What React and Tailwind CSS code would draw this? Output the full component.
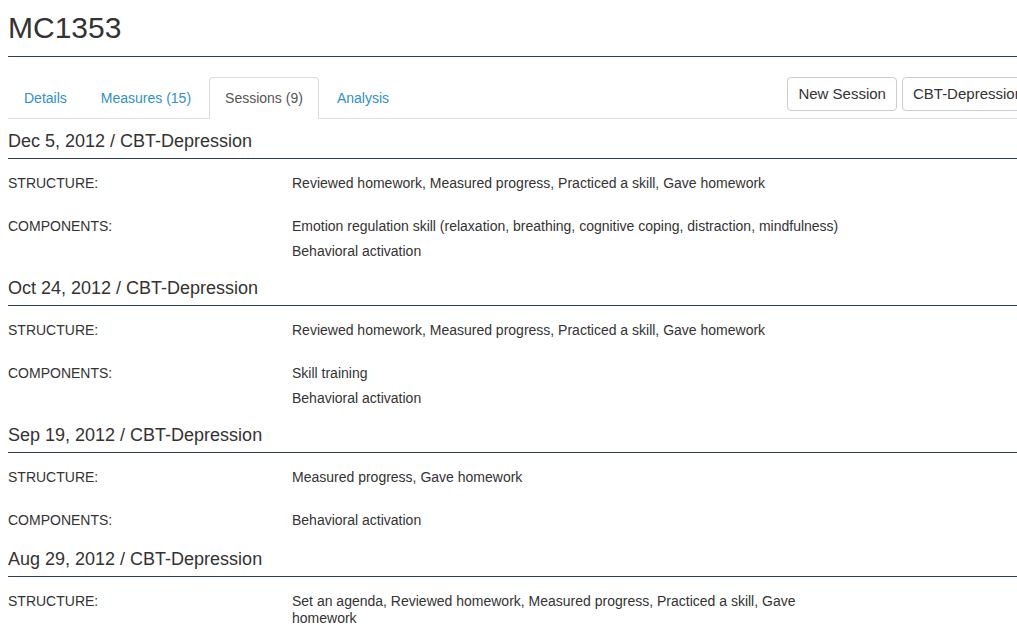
const sessions = [
  {
    title: "Dec 5, 2012 / CBT-Depression",
    rows: [
      { label: "STRUCTURE:", values: ["Reviewed homework, Measured progress, Practiced a skill, Gave homework"] },
      {
        label: "COMPONENTS:",
        values: [
          "Emotion regulation skill (relaxation, breathing, cognitive coping, distraction, mindfulness)",
          "Behavioral activation",
        ],
      },
    ],
  },
  {
    title: "Oct 24, 2012 / CBT-Depression",
    rows: [
      { label: "STRUCTURE:", values: ["Reviewed homework, Measured progress, Practiced a skill, Gave homework"] },
      { label: "COMPONENTS:", values: ["Skill training", "Behavioral activation"] },
    ],
  },
  {
    title: "Sep 19, 2012 / CBT-Depression",
    rows: [
      { label: "STRUCTURE:", values: ["Measured progress, Gave homework"] },
      { label: "COMPONENTS:", values: ["Behavioral activation"] },
    ],
  },
  {
    title: "Aug 29, 2012 / CBT-Depression",
    spaced: true,
    rows: [
      {
        label: "STRUCTURE:",
        values: ["Set an agenda, Reviewed homework, Measured progress, Practiced a skill, Gave homework"],
      },
    ],
  },
];

const tabs = [
  { name: "Details" },
  { name: "Measures (15)" },
  { name: "Sessions (9)", active: true },
  { name: "Analysis" },
];

function Session({ session }) {
  return (
    <div>
      <h3
        className={
          "text-[18px] leading-[20px] pb-[7px] border-b border-[#2c3e50] " +
          (session.spaced ? "pt-[12px]" : "pt-[10px]")
        }
      >
        {session.title}
      </h3>
      <div className="pt-[16px] flex flex-col gap-[18px]">
        {session.rows.map((row) => (
          <div key={row.label} className="flex">
            <div className="w-[284px] shrink-0 leading-[17px]">{row.label}</div>
            <div className="w-[556px]">
              {row.values.map((v) => (
                <div key={v} className="leading-[17px] mb-[8px]">
                  {v}
                </div>
              ))}
            </div>
          </div>
        ))}
      </div>
    </div>
  );
}

export default function App() {
  return (
    <div
      className="w-full h-[642px] overflow-hidden bg-white text-[#333] text-[14px]"
      style={{ fontFamily: '"Liberation Sans", Arial, sans-serif' }}
    >
      <div className="ml-[8px] w-[1040px]">
        <h1 className="text-[30px] leading-[36px] pt-[10px] pb-[10px] border-b border-[#2c3e50]">MC1353</h1>

        <div className="mt-[20px] flex items-end border-b border-[#ddd]">
          <ul className="flex -mb-px">
            {tabs.map((t) =>
              t.active ? (
                <li key={t.name} className="mr-[2px]">
                  <a className="block px-[15px] py-[10px] leading-[20px] bg-white border border-[#ddd] border-b-white rounded-t-[4px] text-[#555]">
                    {t.name}
                  </a>
                </li>
              ) : (
                <li key={t.name} className="mr-[2px]">
                  <a className="block px-[15px] py-[10px] leading-[20px] border border-transparent text-[#2f8fcf]">
                    {t.name}
                  </a>
                </li>
              )
            )}
          </ul>
          <div className="ml-auto flex gap-[5px] self-start text-[15px]">
            <button className="h-[34px] px-[10px] border border-[#ccc] rounded-[4px] bg-white leading-[20px]">
              New Session
            </button>
            <button className="h-[34px] px-[10px] border border-[#ccc] rounded-[4px] bg-white leading-[20px] flex items-center gap-[6px]">
              CBT-Depression
              <span className="inline-block w-0 h-0 border-x-[4px] border-x-transparent border-t-[4px] border-t-[#333]" />
            </button>
          </div>
        </div>

        <div className="pt-[2px]">
          {sessions.map((s) => (
            <Session key={s.title} session={s} />
          ))}
        </div>
      </div>
    </div>
  );
}
